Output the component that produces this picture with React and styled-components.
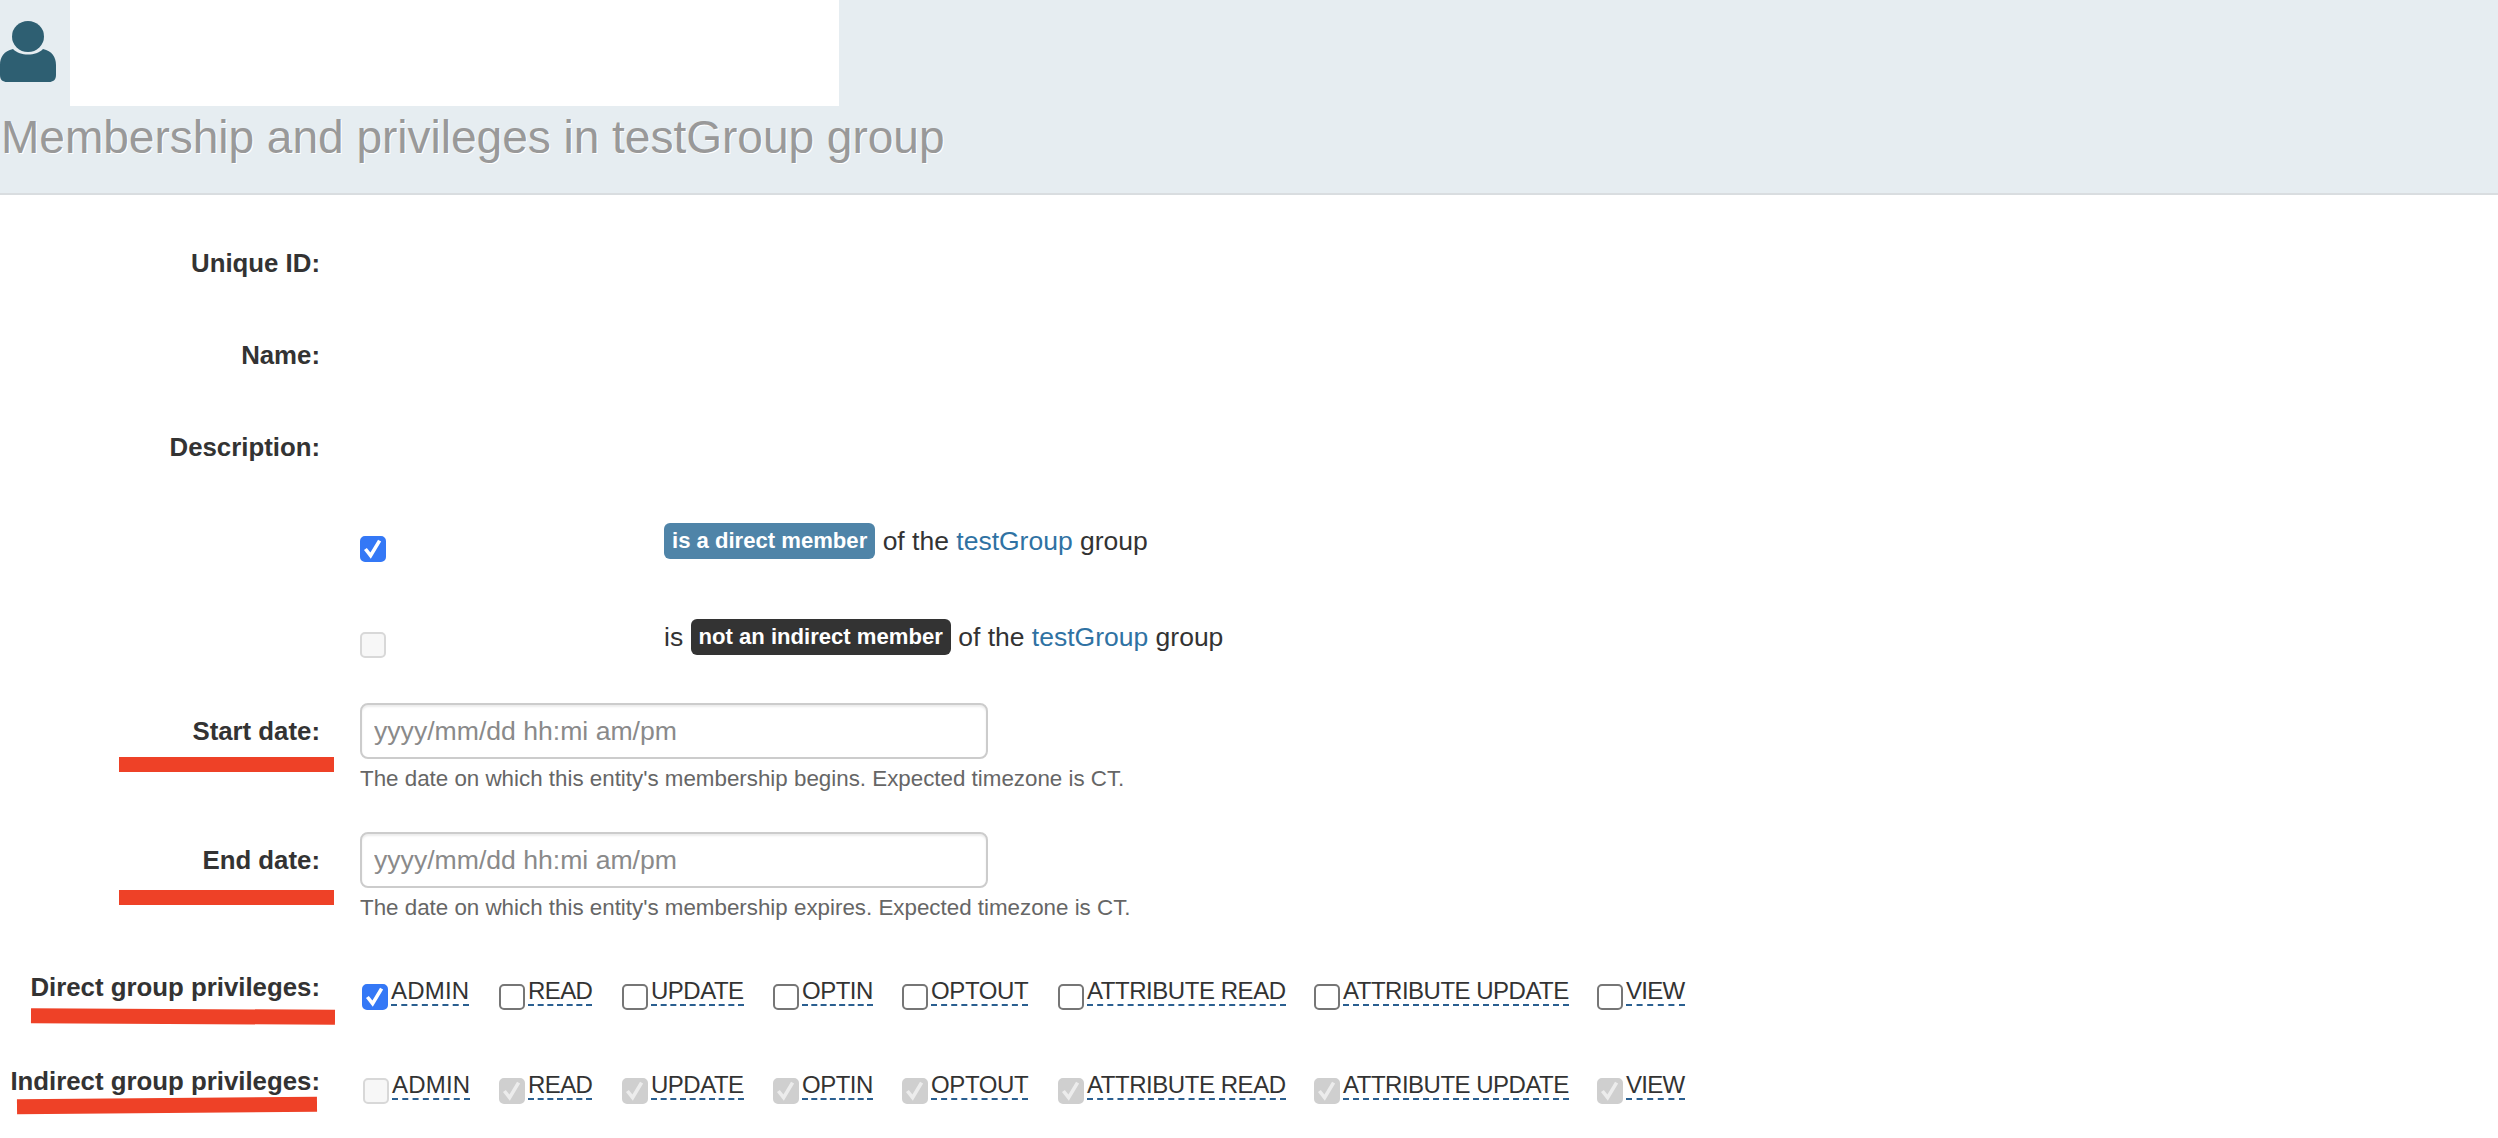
import React from "react";
import styled, { createGlobalStyle } from "styled-components";

const Global = createGlobalStyle`
  html, body { margin: 0; padding: 0; background: #fff; }
  body { font-family: "Liberation Sans", Arial, sans-serif; font-size: 24px; color: #333; }
`;

const Page = styled.div`
  width: 2498px;
  height: 1138px;
  overflow: hidden;
  background: #fff;
`;
const Header = styled.header`
  height: 193px;
  background: #e6edf1;
  border-bottom: 2px solid #d9dde0;
`;
const Identity = styled.div`
  display: flex;
  height: 106px;
`;
const AvatarSlot = styled.div`
  width: 70px;
  padding-top: 21px;
`;
const NameBox = styled.div`
  width: 769px;
  background: #fff;
`;
const Title = styled.h1`
  margin: 0;
  padding: 6px 0 0 1px;
  font-size: 46px;
  font-weight: 400;
  line-height: 50px;
  color: #999;
  text-shadow: 1px 1px 0 #fff;
`;
const Form = styled.main`
  display: flex;
  flex-direction: column;
  padding-top: 22px;
`;
const Row = styled.div`
  position: relative;
  display: grid;
  grid-template-columns: 320px 1fr;
  column-gap: 40px;
  height: ${(p) => p.$h}px;
  margin-top: ${(p) => p.$mt || 0}px;
  align-items: ${(p) => p.$align || "center"};
`;
const Label = styled.label`
  text-align: right;
  font-weight: 700;
  font-size: 25.8px;
  line-height: 28px;
  color: #333;
  padding-top: ${(p) => p.$top || 0}px;
  white-space: nowrap;
`;
const MemberCell = styled.div`
  display: grid;
  grid-template-columns: 304px 1fr;
  align-items: center;
`;
const MemberText = styled.div`
  font-size: 26.5px;
  line-height: 36px;
  margin-top: -16px;
  color: #333;
  white-space: nowrap;
`;
const Badge = styled.span`
  display: inline-block;
  vertical-align: middle;
  height: 36px;
  line-height: 36px;
  margin-top: -3px;
  padding: 0 8px;
  border-radius: 6px;
  font-size: 22.1px;
  font-weight: 700;
  color: #fff;
  background: ${(p) => (p.$dark ? "#333333" : "#4f84a8")};
`;
const Link = styled.a`
  color: #2f72a3;
`;
const Box = styled.span`
  box-sizing: border-box;
  flex: none;
  display: inline-flex;
  align-items: center;
  justify-content: center;
  width: 26px;
  height: 26px;
  border-radius: 5px;
  border: 2px solid ${(p) =>
    p.$variant === "on" ? "#3478f6" : p.$variant === "off" ? "#767676" : p.$variant === "mute" ? "#cfcfcf" : "#d8d8d8"};
  background: ${(p) =>
    p.$variant === "on" ? "#3478f6" : p.$variant === "off" ? "#fff" : p.$variant === "mute" ? "#cfcfcf" : "#f7f7f7"};
`;
const Field = styled.div`
  display: flex;
  flex-direction: column;
`;
const DateInput = styled.input`
  box-sizing: border-box;
  width: 628px;
  height: 56px;
  padding: 0 12px;
  border: 2px solid #ccc;
  border-radius: 8px;
  box-shadow: inset 0 2px 2px rgba(0, 0, 0, 0.075);
  font-family: inherit;
  font-size: 26.6px;
  color: #555;
  outline: none;
  &::placeholder { color: #8a8a8a; opacity: 1; }
`;
const Help = styled.div`
  margin-top: 7px;
  font-size: 22.35px;
  line-height: 26px;
  color: #666;
  white-space: nowrap;
`;
const Privileges = styled.div`
  display: flex;
  align-items: flex-start;
  padding-top: 5px;
  margin-left: ${(p) => p.$inset}px;
`;
const Priv = styled.div`
  display: flex;
  align-items: flex-end;
  gap: 3px;
  flex: none;
  width: ${(p) => p.$w}px;
  white-space: nowrap;
`;
const PrivName = styled.span`
  display: inline-block;
  font-size: 24px;
  line-height: 26px;
  letter-spacing: ${(p) => p.$track}px;
  border-bottom: 2px dashed #2a5f90;
  margin-bottom: 4px;
  color: #333;
`;
const Mark = styled.div`
  position: absolute;
  left: ${(p) => p.$x}px;
  top: ${(p) => p.$y}px;
  width: ${(p) => p.$w}px;
  height: ${(p) => p.$t}px;
  background: #ee4127;
  transform: rotate(${(p) => p.$tilt || 0}deg);
`;

const Check = ({ color }) => (
  <svg width="22" height="22" viewBox="0 0 22 22" aria-hidden="true">
    <path d="M3.4 11 L8.6 17.6 L17.6 2.6" fill="none" stroke={color} strokeWidth="3.6" />
  </svg>
);

const Avatar = () => (
  <svg width="56" height="61" viewBox="0 0 56 61" aria-hidden="true">
    <path
      d="M0 44 C0 36 4 30 13 28 C17 32 22 33.5 28 33.5 C34 33.5 39 32 43 28 C52 30 56 36 56 44 L56 54 C56 59 53 61 49 61 L7 61 C3 61 0 59 0 54 Z"
      fill="#2e5f72"
    />
    <ellipse cx="28" cy="15.5" rx="16" ry="15.5" fill="#2e5f72" />
  </svg>
);

const PRIVS = [
  ["ADMIN", 137, 0.2],
  ["READ", 123, -0.6],
  ["UPDATE", 151, -0.5],
  ["OPTIN", 129, -0.5],
  ["OPTOUT", 156, -0.4],
  ["ATTRIBUTE READ", 256, -0.45],
  ["ATTRIBUTE UPDATE", 283, -0.5],
  ["VIEW", 88, -0.7],
];

const PrivRow = ({ inset, first, rest }) => (
  <Privileges $inset={inset}>
    {PRIVS.map(([name, width, track], i) => {
      const v = i === 0 ? first : rest;
      return (
        <Priv key={name} $w={i === 0 ? width + 2 - inset : width}>
          <Box $variant={v}>
            {v === "on" && <Check color="#fff" />}
            {v === "mute" && <Check color="#ececec" />}
          </Box>
          <PrivName $track={track}>{name}</PrivName>
        </Priv>
      );
    })}
  </Privileges>
);

export default function App() {
  return (
    <Page>
      <Global />
      <Header>
        <Identity>
          <AvatarSlot>
            <Avatar />
          </AvatarSlot>
          <NameBox />
        </Identity>
        <Title>Membership and privileges in testGroup group</Title>
      </Header>
      <Form>
        <Row $h={92}><Label>Unique ID:</Label></Row>
        <Row $h={92}><Label>Name:</Label></Row>
        <Row $h={92}><Label>Description:</Label></Row>
        <Row $h={96} $mt={8}>
          <span />
          <MemberCell>
            <Box $variant="on"><Check color="#fff" /></Box>
            <MemberText>
              <Badge>is a direct member</Badge> of the <Link>testGroup</Link> group
            </MemberText>
          </MemberCell>
        </Row>
        <Row $h={96}>
          <span />
          <MemberCell>
            <Box $variant="idle" />
            <MemberText>
              is <Badge $dark>not an indirect member</Badge> of the <Link>testGroup</Link> group
            </MemberText>
          </MemberCell>
        </Row>
        <Row $h={129} $mt={10} $align="start">
          <Label $top={14}>Start date:</Label>
          <Field>
            <DateInput placeholder="yyyy/mm/dd hh:mi am/pm" />
            <Help>The date on which this entity's membership begins. Expected timezone is CT.</Help>
          </Field>
          <Mark $x={119} $y={54} $w={215} $t={15} />
        </Row>
        <Row $h={141} $align="start">
          <Label $top={14}>End date:</Label>
          <Field>
            <DateInput placeholder="yyyy/mm/dd hh:mi am/pm" />
            <Help>The date on which this entity's membership expires. Expected timezone is CT.</Help>
          </Field>
          <Mark $x={119} $y={58} $w={215} $t={15} />
        </Row>
        <Row $h={94} $align="start">
          <Label>Direct group privileges:</Label>
          <PrivRow inset={2} first="on" rest="off" />
          <Mark $x={31} $y={36} $w={304} $t={15} $tilt={0.3} />
        </Row>
        <Row $h={60} $align="start">
          <Label>Indirect group privileges:</Label>
          <PrivRow inset={3} first="idle" rest="mute" />
          <Mark $x={17} $y={31} $w={300} $t={15} $tilt={-0.5} />
        </Row>
      </Form>
    </Page>
  );
}
